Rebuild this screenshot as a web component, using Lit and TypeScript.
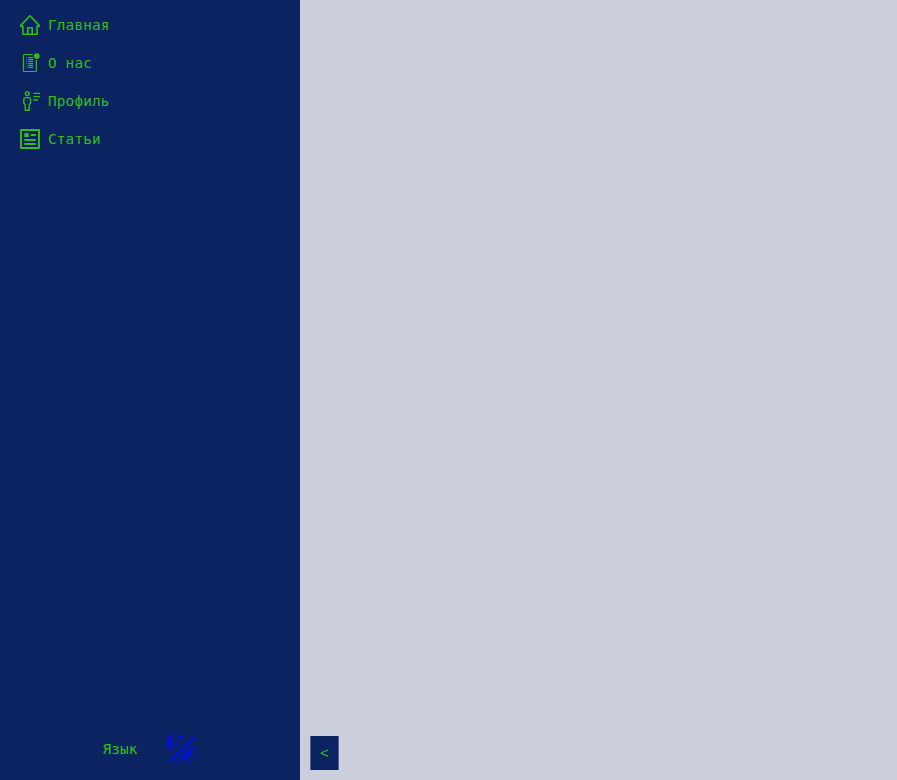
import { LitElement, html, css, svg } from "lit";
import { customElement } from "lit/decorators.js";

const home = svg`<svg class="icon" viewBox="0 0 20 20" fill="none" stroke="currentColor" stroke-width="1.6" stroke-linejoin="round" stroke-linecap="round">
  <path d="M2.9 11.2H.8v-.8L10 .8l9.2 9.6v.8h-2.1v8.1H2.9zM7.8 19v-6.2h4.4V19"/></svg>`;

const about = svg`<svg class="icon" viewBox="0 0 20 20" fill="none" stroke="currentColor">
  <path d="M13 1.5H4.4q-.9 0-.9.9v15.2q0 .9.9.9h11.1q.9 0 .9-.9V7" stroke-width="1.2"/>
  <path d="M6 4.6h1.2M6 6.6h1.2M6 8.5h1.2M6 10.5h1.2M6 12.4h1.2M6 14.4h1.2" opacity=".6"/>
  <path d="M8.2 4.6h4.9M8.2 6.6h4.9M8.2 8.5h4.9M8.2 10.5h4.9M8.2 12.4h4.9M8.2 14.4h4.9" stroke-width="1.2"/>
  <circle cx="16.8" cy="3.1" r="2.9" fill="currentColor" stroke="none"/></svg>`;

const profile = svg`<svg class="icon" viewBox="0 0 20 20" fill="none" stroke="currentColor" stroke-width="1.4" stroke-linejoin="round">
  <circle cx="7.2" cy="2.6" r="1.9"/>
  <path d="M5.9 6.6h2.6q2.1 0 2.1 2.1v3.5L9.2 13.5v5.8h-4v-5.8L3.8 12.2V8.7q0-2.1 2.1-2.1z"/>
  <path d="M13.4 2.4h6.8M13.4 5.6h6.8M13.4 9h4.6"/></svg>`;

const articles = svg`<svg class="icon" viewBox="0 0 20 20" fill="none" stroke="currentColor" stroke-width="1.9" stroke-linejoin="round">
  <path d="M1 1h18v18H1z"/>
  <path d="M4.3 4.1h4.4v4H4.3z" fill="currentColor" stroke="none"/>
  <path d="M10.8 6h4.9M4.3 11h11.4M4.3 15h11.4"/></svg>`;

const theme = svg`<svg class="theme" viewBox="0 0 32 32" fill="currentColor" stroke="currentColor" stroke-width=".5" stroke-linejoin="round">
  <path d="M7.2.9C-1.2 3.4-2 13.6 5.8 17.2H7.6C4.2 12.1 4 5.3 8.3 1z"/>
  <path d="m14.8.8.9 2.1 2.3.1-1.7 1.5.6 2.2-2-1.3-2 1.3.7-2.2-1.7-1.5 2.2-.1zM10.2 7.4l.8 1.8 2 .1-1.5 1.3.5 1.9-1.8-1.1-1.7 1.1.5-1.9-1.5-1.3 2-.1z"/>
  <path d="m4.7 27.7 23-23" fill="none" stroke-width="3" stroke-linecap="round"/>
  <path d="M13.2 25.8 25.5 13.5q1.5 5.5-1.7 9.3-4.1 4.8-10.6 3zM27.5 13.2l3.9.2-2.3 3.2zM27.6 23.7l1.7-2.8 1.9 3.5zM20.5 27.7l3.1-.7v4zM12.2 27.2l3.7 1.4-3.3 2.3z"/></svg>`;

const items = [
  { icon: home, label: "Главная" },
  { icon: about, label: "О нас" },
  { icon: profile, label: "Профиль" },
  { icon: articles, label: "Статьи" },
];

@customElement("app-root")
export class AppRoot extends LitElement {
  static styles = css`
    :host {
      display: flex;
      height: 780px;
      background: #cbcedb;
      color: #30bf18;
      font: 14.4px/24px "DejaVu Sans Mono", monospace;
      letter-spacing: 0.13px;
    }
    .sidebar {
      box-sizing: border-box;
      width: 300px;
      display: flex;
      flex-direction: column;
      justify-content: space-between;
      padding: 13px 20px 15px;
      background: #0b2361;
    }
    nav {
      display: flex;
      flex-direction: column;
      gap: 14px;
    }
    .item {
      display: flex;
      align-items: center;
      gap: 8px;
    }
    .icon {
      width: 20px;
      height: 20px;
      overflow: visible;
    }
    .footer {
      display: flex;
      justify-content: center;
      align-items: center;
      gap: 28px;
    }
    .theme {
      width: 32px;
      height: 32px;
      color: #0115ce;
    }
    .toggle {
      align-self: flex-end;
      box-sizing: border-box;
      width: 29px;
      height: 34px;
      margin: 0 0 10px 10px;
      padding: 4px 0 0;
      border: solid #54648f;
      border-width: 0 1px;
      background: #0b2361;
      color: inherit;
      font: 15px/24px "Liberation Mono", monospace;
    }
  `;

  render() {
    return html`
      <aside class="sidebar">
        <nav>${items.map((i) => html`<div class="item">${i.icon}<span>${i.label}</span></div>`)}</nav>
        <div class="footer"><span>Язык</span>${theme}</div>
      </aside>
      <button class="toggle">&lt;</button>
    `;
  }
}
